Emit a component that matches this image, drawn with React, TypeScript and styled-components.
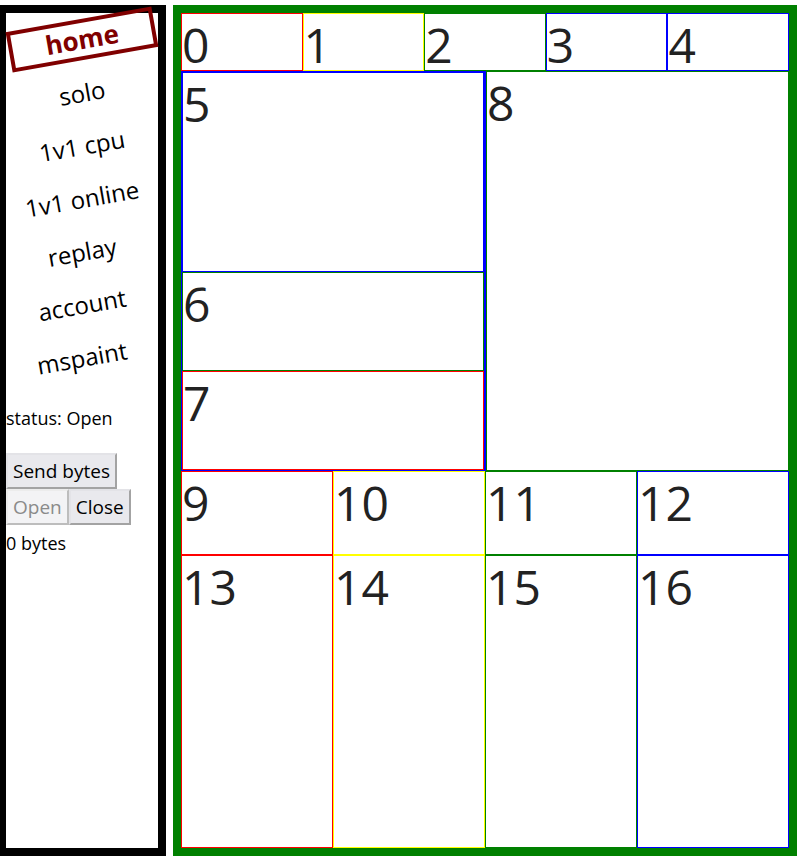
import styled, { createGlobalStyle } from "styled-components";

const GlobalStyle = createGlobalStyle`
  html, body {
    margin: 0;
    padding: 0;
    background: #fff;
    font-family: "Segoe UI", "Open Sans", sans-serif;
    overflow: hidden;
  }
`;

export const Page = styled.div`
  display: flex;
  gap: 7px;
  padding-top: 5px;
  margin-left: -2px;
  height: 851px;
`;

export const SideBar = styled.nav`
  width: 152px;
  border: 8px solid #000;
  background: #fff;
  display: flex;
  flex-direction: column;
`;

export const NavItem = styled.a<{ $active?: boolean }>`
  height: 53px;
  display: flex;
  align-items: center;
  justify-content: center;
  font-size: ${({ $active }) => ($active ? "26px" : "24px")};
  font-weight: ${({ $active }) => ($active ? 700 : 400)};
  color: ${({ $active }) => ($active ? "#800000" : "#000")};
  text-decoration: none;
  transform: rotate(-10deg);
  & > span {
    display: block;
    line-height: 33px;
    padding: 0 ${({ $active }) => ($active ? "33px" : "0")};
    border: ${({ $active }) => ($active ? "4px solid #800000" : "none")};
  }
`;

export const Status = styled.p`
  margin: 21px 0 22px;
  font-size: 18px;
  line-height: 26px;
`;

export const ButtonRow = styled.div`
  display: flex;
`;

export const Button = styled.button`
  height: 36px;
  padding: 0 5px;
  font-family: inherit;
  font-size: 19px;
  color: #000;
  background: #e9e9ed;
  border: 2px solid;
  border-color: #e3e3e7 #a3a3a3 #a3a3a3 #e3e3e7;
  &:disabled {
    color: #8a8a8a;
    background: #f3f3f5;
    border-color: #ececec #bdbdbd #bdbdbd #ececec;
  }
`;

export const Bytes = styled.div`
  margin-top: 4px;
  font-size: 18px;
  line-height: 28px;
`;

export const Board = styled.main`
  width: 608px;
  border: 8px solid #008000;
  display: grid;
  grid-template-rows: 58px 400px 84px 1fr;
`;

export const Row = styled.div<{ $line: string; $cols: string }>`
  display: grid;
  grid-template-columns: ${({ $cols }) => $cols};
  box-shadow: inset 0 0 0 1px ${({ $line }) => $line};
  min-height: 0;
`;

export const Stack = styled.div`
  display: grid;
  grid-template-rows: 200px 99px 1fr;
  border: 1px solid #0000ff;
  border-right-width: 2px;
`;

export const Cell = styled.div<{ $line: string }>`
  border: 1px solid ${({ $line }) => $line};
  font-size: 48px;
  line-height: 61px;
  color: #222;
  overflow: visible;
  min-height: 0;
`;

const navLinks = ["home", "solo", "1v1 cpu", "1v1 online", "replay", "account", "mspaint"];

const R = "#ff0000";
const Y = "#ffff00";
const G = "#008000";
const B = "#0000ff";

export default function App() {
  return (
    <>
      <GlobalStyle />
      <Page>
        <SideBar>
          {navLinks.map((name, i) => (
            <NavItem key={name} $active={i === 0}>
              <span>{name}</span>
            </NavItem>
          ))}
          <Status>status: Open</Status>
          <ButtonRow>
            <Button>Send bytes</Button>
          </ButtonRow>
          <ButtonRow>
            <Button disabled>Open</Button>
            <Button>Close</Button>
          </ButtonRow>
          <Bytes>0 bytes</Bytes>
        </SideBar>
        <Board>
          <Row $line={R} $cols="repeat(5, 1fr)">
            <Cell $line={R}>0</Cell>
            <Cell $line={Y}>1</Cell>
            <Cell $line={G}>2</Cell>
            <Cell $line={B}>3</Cell>
            <Cell $line={B}>4</Cell>
          </Row>
          <Row $line={R} $cols="305px 1fr">
            <Stack>
              <Cell $line={B}>5</Cell>
              <Cell $line={G}>6</Cell>
              <Cell $line={R}>7</Cell>
            </Stack>
            <Cell $line={G}>8</Cell>
          </Row>
          <Row $line={Y} $cols="repeat(4, 1fr)">
            <Cell $line={R}>9</Cell>
            <Cell $line={Y}>10</Cell>
            <Cell $line={G}>11</Cell>
            <Cell $line={B}>12</Cell>
          </Row>
          <Row $line={G} $cols="repeat(4, 1fr)">
            <Cell $line={R}>13</Cell>
            <Cell $line={Y}>14</Cell>
            <Cell $line={G}>15</Cell>
            <Cell $line={B}>16</Cell>
          </Row>
        </Board>
      </Page>
    </>
  );
}
